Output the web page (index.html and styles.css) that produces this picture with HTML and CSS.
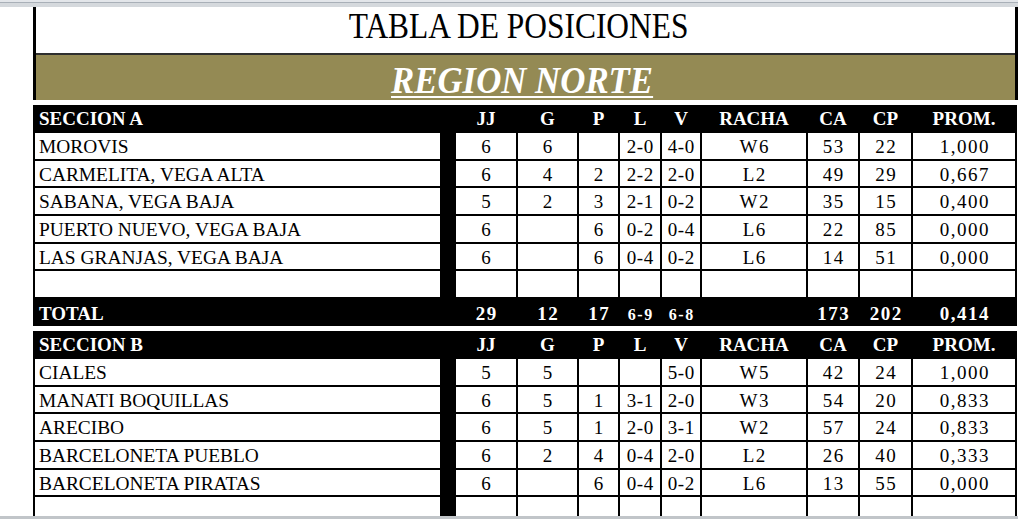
FILE: index.html
```html
<!DOCTYPE html>
<html lang="es">
<head>
<meta charset="utf-8">
<title>Tabla de posiciones</title>
<link rel="stylesheet" href="styles.css">
</head>
<body>
<div class="page">
  <div class="topbar"></div>
  <div class="content">
    <div class="sheet">
      <div class="banner">
        <div class="title"><span class="title-text">TABLA DE POSICIONES</span></div>
        <div class="region"><span class="region-text">REGION NORTE</span></div>
      </div>

      <div class="section first">
        <div class="row head"><div class="c name">SECCION A</div><div class="c sp"></div><div class="c">JJ</div><div class="c">G</div><div class="c">P</div><div class="c">L</div><div class="c">V</div><div class="c">RACHA</div><div class="c">CA</div><div class="c">CP</div><div class="c">PROM.</div></div>
        <div class="row body"><div class="c name">MOROVIS</div><div class="c sp"></div><div class="c n">6</div><div class="c n">6</div><div class="c n"></div><div class="c n s">2-0</div><div class="c n s">4-0</div><div class="c n">W6</div><div class="c n">53</div><div class="c n">22</div><div class="c n">1,000</div></div>
        <div class="row body"><div class="c name">CARMELITA, VEGA ALTA</div><div class="c sp"></div><div class="c n">6</div><div class="c n">4</div><div class="c n">2</div><div class="c n s">2-2</div><div class="c n s">2-0</div><div class="c n">L2</div><div class="c n">49</div><div class="c n">29</div><div class="c n">0,667</div></div>
        <div class="row body"><div class="c name">SABANA, VEGA BAJA</div><div class="c sp"></div><div class="c n">5</div><div class="c n">2</div><div class="c n">3</div><div class="c n s">2-1</div><div class="c n s">0-2</div><div class="c n">W2</div><div class="c n">35</div><div class="c n">15</div><div class="c n">0,400</div></div>
        <div class="row body"><div class="c name">PUERTO NUEVO, VEGA BAJA</div><div class="c sp"></div><div class="c n">6</div><div class="c n"></div><div class="c n">6</div><div class="c n s">0-2</div><div class="c n s">0-4</div><div class="c n">L6</div><div class="c n">22</div><div class="c n">85</div><div class="c n">0,000</div></div>
        <div class="row body"><div class="c name">LAS GRANJAS, VEGA BAJA</div><div class="c sp"></div><div class="c n">6</div><div class="c n"></div><div class="c n">6</div><div class="c n s">0-4</div><div class="c n s">0-2</div><div class="c n">L6</div><div class="c n">14</div><div class="c n">51</div><div class="c n">0,000</div></div>
        <div class="row body"><div class="c name"></div><div class="c sp"></div><div class="c n"></div><div class="c n"></div><div class="c n"></div><div class="c n"></div><div class="c n"></div><div class="c n"></div><div class="c n"></div><div class="c n"></div><div class="c n"></div></div>
        <div class="row total"><div class="c name">TOTAL</div><div class="c sp"></div><div class="c n">29</div><div class="c n">12</div><div class="c n">17</div><div class="c n"><span class="small">6-9</span></div><div class="c n"><span class="small">6-8</span></div><div class="c n"></div><div class="c n">173</div><div class="c n">202</div><div class="c n">0,414</div></div>
      </div>

      <div class="section">
        <div class="row head"><div class="c name">SECCION B</div><div class="c sp"></div><div class="c">JJ</div><div class="c">G</div><div class="c">P</div><div class="c">L</div><div class="c">V</div><div class="c">RACHA</div><div class="c">CA</div><div class="c">CP</div><div class="c">PROM.</div></div>
        <div class="row body"><div class="c name">CIALES</div><div class="c sp"></div><div class="c n">5</div><div class="c n">5</div><div class="c n"></div><div class="c n s"></div><div class="c n s">5-0</div><div class="c n">W5</div><div class="c n">42</div><div class="c n">24</div><div class="c n">1,000</div></div>
        <div class="row body"><div class="c name">MANATI BOQUILLAS</div><div class="c sp"></div><div class="c n">6</div><div class="c n">5</div><div class="c n">1</div><div class="c n s">3-1</div><div class="c n s">2-0</div><div class="c n">W3</div><div class="c n">54</div><div class="c n">20</div><div class="c n">0,833</div></div>
        <div class="row body"><div class="c name">ARECIBO</div><div class="c sp"></div><div class="c n">6</div><div class="c n">5</div><div class="c n">1</div><div class="c n s">2-0</div><div class="c n s">3-1</div><div class="c n">W2</div><div class="c n">57</div><div class="c n">24</div><div class="c n">0,833</div></div>
        <div class="row body"><div class="c name">BARCELONETA PUEBLO</div><div class="c sp"></div><div class="c n">6</div><div class="c n">2</div><div class="c n">4</div><div class="c n s">0-4</div><div class="c n s">2-0</div><div class="c n">L2</div><div class="c n">26</div><div class="c n">40</div><div class="c n">0,333</div></div>
        <div class="row body"><div class="c name">BARCELONETA PIRATAS</div><div class="c sp"></div><div class="c n">6</div><div class="c n"></div><div class="c n">6</div><div class="c n s">0-4</div><div class="c n s">0-2</div><div class="c n">L6</div><div class="c n">13</div><div class="c n">55</div><div class="c n">0,000</div></div>
        <div class="row body"><div class="c name"></div><div class="c sp"></div><div class="c n"></div><div class="c n"></div><div class="c n"></div><div class="c n"></div><div class="c n"></div><div class="c n"></div><div class="c n"></div><div class="c n"></div><div class="c n"></div></div>
      </div>
    </div>
  </div>
  <div class="bottombar"></div>
</div>
</body>
</html>
```

FILE: styles.css
```css
html, body {
  margin: 0;
  padding: 0;
  background: #ffffff;
}

body {
  font-family: "Liberation Serif", "Times New Roman", serif;
  color: #000;
}

.page {
  display: flex;
  flex-direction: column;
  height: 519px;
  width: 1018px;
  overflow: hidden;
}

.topbar {
  flex: 0 0 7px;
  background: linear-gradient(to bottom, #e3e6ea 0, #e3e6ea 2px, #a9b0b8 2px, #a9b0b8 3px, #d5d9dd 3px, #d5d9dd 100%);
}

.content {
  flex: 1 1 auto;
  overflow: hidden;
}

.bottombar {
  flex: 0 0 3px;
  background: #c1c5c9;
}

.sheet {
  margin-left: 33px;
  width: 984px;
}

.banner {
  width: 979px;
  border-left: 3px solid #000;
  border-right: 3px solid #000;
}

.title {
  height: 48px;
  box-sizing: border-box;
  padding-top: 1px;
  line-height: 36px;
  text-align: center;
  border-bottom: 2px solid #2e2e2e;
  font-size: 36px;
}

.title-text {
  display: inline-block;
  transform: scaleX(0.873);
  transform-origin: center;
  margin-right: 13px;
}

.region {
  height: 45px;
  box-sizing: border-box;
  padding-top: 5px;
  line-height: 40px;
  background: #948a54;
  text-align: center;
  color: #fff;
  font-size: 38px;
  font-weight: bold;
  font-style: italic;
}

.region-text {
  display: inline-block;
  transform: scaleX(0.916);
  text-decoration: underline;
  text-decoration-thickness: 2px;
  text-underline-offset: 3px;
  margin-right: 6px;
}

.section {
  display: flex;
  flex-direction: column;
  gap: 2px;
  background: #000;
  padding: 0 2px;
  margin-top: 5px;
}

.row {
  display: grid;
  grid-template-columns: 405px 12px 60px 59px 39px 40px 38px 104px 50px 51px 102px;
  column-gap: 2px;
  font-size: 19px;
}

.c {
  box-sizing: border-box;
  text-align: center;
  white-space: nowrap;
  overflow: hidden;
}

.c.name {
  text-align: left;
  padding-left: 4px;
}

.body .c.name {
  font-size: 19.4px;
}

.head {
  height: 26px;
  color: #fff;
  font-weight: bold;
}

.head .c {
  padding-top: 3px;
  line-height: 22px;
}

.body {
  height: 25.67px;
}

.body .c {
  background: #fff;
  padding-top: 3px;
  line-height: 22px;
}

.body .c.sp {
  background: transparent;
}

.body .n {
  letter-spacing: 1.5px;
  padding-left: 1.5px;
}

.body .n.s {
  letter-spacing: 0.5px;
  padding-left: 0.5px;
}

.total {
  height: 27px;
  color: #fff;
  font-weight: bold;
}

.total .c {
  padding-top: 4px;
  line-height: 22px;
}

.total .n {
  letter-spacing: 1.5px;
  padding-left: 1.5px;
}

.total .small {
  font-size: 16px;
  letter-spacing: 1.5px;
}
```
